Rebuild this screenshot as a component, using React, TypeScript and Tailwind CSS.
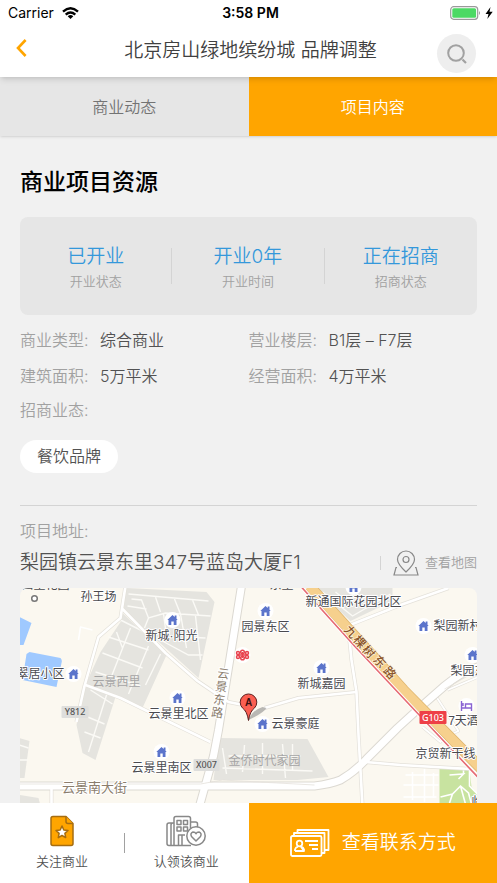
const stats = [
  { value: "已开业", label: "开业状态" },
  { value: "开业0年", label: "开业时间" },
  { value: "正在招商", label: "招商状态" },
];

const details = [
  { label: "商业类型:", value: "综合商业" },
  { label: "营业楼层:", value: "B1层 – F7层" },
  { label: "建筑面积:", value: "5万平米" },
  { label: "经营面积:", value: "4万平米" },
];

const places = [
  { name: "孙王场", x: 98, y: 601 },
  { name: "新城·阳光", x: 171, y: 640, icon: [172, 620] },
  { name: "园景东区", x: 265, y: 631, icon: [265, 611] },
  { name: "新通国际花园北区", x: 353, y: 606, icon: [353, 587] },
  { name: "新城嘉园", x: 321, y: 688, icon: [321, 668] },
  { name: "翠居小区", x: 40, y: 678, icon: [73, 674] },
  { name: "云景里北区", x: 178, y: 718, icon: [177, 698] },
  { name: "云景里南区", x: 161, y: 772, icon: [161, 752] },
  { name: "云景豪庭", x: 295, y: 728, icon: [262, 724] },
  { name: "梨园新村", x: 457, y: 630, icon: [423, 626] },
  { name: "梨园东里", x: 474, y: 675, icon: [472, 655] },
  { name: "7天酒店", x: 469, y: 725 },
  { name: "京贸新干线", x: 445, y: 758 },
  { name: "临河里", x: 489, y: 806 },
];

const roadName = [
  { ch: "云", x: 223, y: 678 },
  { ch: "景", x: 221, y: 691 },
  { ch: "东", x: 219, y: 704 },
  { ch: "路", x: 217, y: 717 },
];

const highwayName = [
  { ch: "九", x: 350, y: 632 },
  { ch: "棵", x: 359, y: 642 },
  { ch: "树", x: 368, y: 652 },
  { ch: "东", x: 379, y: 662 },
  { ch: "路", x: 389, y: 673 },
];

const roads = [
  "M19 786H314Q330 784 340 780Q354 772 366 759L397 728L420 707L444 686Q460 672 480 666",
  "M241 586L230 655L218 730L213 756L199 806",
];

const lanes = [
  "M125 586L120 618L98 637L84 686L76 722",
  "M122 609L165 653L197 681L228 702L248 706",
  "M85 685L120 698L210 742",
  "M264 708L298 698L356 692",
  "M349 640L351 660L356 692L358 735L362 806",
  "M448 588L400 605L347 626",
  "M365 762L400 765L470 769",
  "M51 788V806",
];

const alleys =
  "M128 594L208 601M131 599L141 600L148 618L165 613L210 616M155 597L160 612M174 599L180 614M192 600L198 615M148 618L144 628M180 614L186 648M195 616L200 660M163 614L166 636M184 637L205 638M160 640L188 655L202 655M127 606L146 609M108 637L148 650M116 632L122 648M102 653L142 668M130 628L108 684M148 646L128 694M160 654L145 685M95 672L140 686M90 690L112 704M107 692L88 752M80 714L104 724M84 732L100 738M120 620L150 635M222 748L226 774M244 745L242 772M262 743V774M282 744L285 778M228 756H300M222 768L312 771M292 744V770M322 592L352 616L390 594M335 592L350 604M19 745L28 748M19 760H27";

function HouseMark({ x, y }: { x: number; y: number }) {
  return (
    <g transform={`translate(${x} ${y})`}>
      <circle r="8" fill="#fff" />
      <path d="M-5.2 0L0-5L2.2-3V-4.6H4V-1.3L5.2 0H4V5H1.2V1.5H-1.2V5H-4V0Z" fill="#5b74cb" />
    </g>
  );
}

function AreaMap() {
  return (
    <svg
      viewBox="19 588 458 215"
      preserveAspectRatio="xMidYMin slice"
      className='h-full w-full font-["Liberation_Sans","Noto_Sans_CJK_SC",sans-serif] font-normal'
      role="img"
      aria-label="地图"
    >
      <rect x="19" y="588" width="458" height="240" fill="#fbf8f0" />
      <g fill="#e5e4df">
        <path d="M126 588L206 592L214 602L198 678L165 648L122 609Z" />
        <path d="M122 613L166 655L142 708L115 697L95 760L82 753L76 725L84 687L100 652L120 622Z" />
        <path d="M218 738L307 739L328 777L297 780H213Z" />
        <path d="M314 588H392V601L350 621Z" />
        <path d="M19 738L29 741L24 778H19ZM19 795L38 798L40 806H19Z" />
      </g>
      <path d="M19 617L31 623L23 645H19ZM29 652L60 658Q62 660 61 663L56 687L22 680L26 654Z" fill="#9fc9ff" />
      <path d="M439 769H469L471 787L480 797V806H439Z" fill="#c8e3a0" />
      <path d={alleys} fill="none" stroke="#fbfaf6" strokeWidth="1.4" />
      <g fill="none" stroke="#fff" strokeWidth="1.6">
        <path d="M405 775H438M403 785H438M403 797H436M412 772V800M424 769V802M433 773V798" />
        <path d="M449 775L463 774L458 779M463 774V770M440 797L452 794L460 786L468 793L471 804M452 794L449 803M460 786L465 804M469 769V786L480 797" />
      </g>
      <g fill="none" strokeLinejoin="round">
        <path d="M78 640L80 627L92 630" stroke="#fff" strokeWidth="1.6" />
        <path d="M422 727L440 742L444 736M436 697L458 731L447 736M447 690L480 676" stroke="#e4e1da" strokeWidth="3" />
        <path d="M422 727L440 742L444 736M436 697L458 731L447 736M447 690L480 676" stroke="#fff" strokeWidth="1.8" />
        {lanes.map((d) => (
          <path key={d} d={d} stroke="#e4e1da" strokeWidth="4" />
        ))}
        {roads.map((d) => (
          <path key={d} d={d} stroke="#dcd9d2" strokeWidth="9" />
        ))}
        {lanes.map((d) => (
          <path key={d} d={d} stroke="#fff" strokeWidth="2.6" />
        ))}
        {roads.map((d) => (
          <path key={d} d={d} stroke="#fff" strokeWidth="7" />
        ))}
        <path d="M19 784H200L222 780L314 785M444 689L480 669" stroke="#e4e1da" strokeWidth="0.8" />
        <path d="M309 586L403 690L482 770" stroke="#dfb671" strokeWidth="11" />
        <path d="M309 586L403 690L482 770" stroke="#f6d08d" strokeWidth="9.4" />
        <path d="M300 586L354 646L414 710L480 780" stroke="#fff" strokeWidth="3.4" />
        <path d="M300 586L354 646L414 710L480 780" stroke="#e66b74" strokeWidth="1.6" />
      </g>
      {places.map((p) => p.icon && <HouseMark key={p.name} x={p.icon[0]} y={p.icon[1]} />)}
      <circle cx="466" cy="706" r="8" fill="#fff" />
      <path d="M461 701V711M461 708H471M471 711V704H465V708M462.5 703V706" fill="none" stroke="#8a63d2" strokeWidth="1.4" />
      <circle cx="34" cy="598.5" r="2.8" fill="#fff" stroke="#777" strokeWidth="1.5" />
      <circle cx="242" cy="655" r="8" fill="#fff" />
      <g fill="none" stroke="#e8434f" strokeWidth="1.5">
        <circle cx="242" cy="652" r="1.8" />
        <circle cx="242" cy="658" r="1.8" />
        <circle cx="237.5" cy="653" r="1.5" />
        <circle cx="237.5" cy="657" r="1.5" />
        <circle cx="246.5" cy="653" r="1.5" />
        <circle cx="246.5" cy="657" r="1.5" />
        <path d="M238 655H246M242 652V658" />
      </g>
      <g textAnchor="middle" fontSize="12">
        <g fill="#4a4a4f" stroke="#fff" strokeWidth="2" strokeLinejoin="round" paintOrder="stroke">
          {places.map((p) => (
            <text key={p.name} x={p.x} y={p.y}>
              {p.name}
            </text>
          ))}
        </g>
        <text x="45" y="589" fill="#4a4a4f">西里花园</text>
        <text x="281" y="589" fill="#4a4a4f">东里</text>
        <g fill="#a5a5a5">
          <text x="116" y="686">云景西里</text>
          <text x="264" y="765">金侨时代家园</text>
        </g>
        <g fill="#8b7d6d" stroke="#fff" strokeWidth="2" paintOrder="stroke">
          <text x="94" y="792" fontSize="13">云景南大街</text>
          {roadName.map((c) => (
            <text key={c.ch} x={c.x} y={c.y} transform={`rotate(8 ${c.x} ${c.y - 5})`}>
              {c.ch}
            </text>
          ))}
        </g>
        <g fill="#8a5428" stroke="#fdf0d4" strokeWidth="1.5" paintOrder="stroke" fontWeight="500">
          {highwayName.map((c) => (
            <text key={c.ch} x={c.x} y={c.y + 4} transform={`rotate(47 ${c.x} ${c.y})`}>
              {c.ch}
            </text>
          ))}
        </g>
      </g>
      <g textAnchor="middle" fontSize="9" fontWeight="500" fontFamily="Noto Sans">
        <rect x="61" y="706" width="27" height="12" rx="1" fill="#dededc" />
        <text x="74.5" y="715" fill="#555">Y812</text>
        <rect x="193" y="759" width="26" height="12" rx="1" fill="#dededc" />
        <text x="206" y="768" fill="#555">X007</text>
        <rect x="419" y="711" width="27" height="13" rx="1" fill="#ee4047" />
        <text x="432.5" y="721" fill="#fff">G103</text>
      </g>
      <path d="M248 720Q252 710 262 707L266 708Q263 713 248 720Z" fill="#777" opacity="0.5" />
      <path d="M248 720.5Q246.5 711 242 708A8.3 8.3 0 1 1 254 708Q249.5 711 248 720.5Z" fill="#fb5f52" stroke="#5b2020" />
      <text x="248" y="706" fontSize="10" fontWeight="600" textAnchor="middle" fill="#3a1010">A</text>
    </svg>
  );
}

function StatusBar() {
  return (
    <div className="grid h-[26px] grid-cols-3 items-center pr-1 pl-2 text-sm font-normal text-black">
      <div className="flex items-center gap-2">
        <span>Carrier</span>
        <svg width="17" height="13" viewBox="0 0 17 13" fill="none" stroke="#000" strokeWidth="2.4">
          <path d="M1 4.6Q8.5-2 16 4.6M3.7 7.6Q8.5 3.4 13.3 7.6" />
          <path d="M8.5 12L5.7 9.2Q8.5 7 11.3 9.2Z" fill="#000" stroke="none" />
        </svg>
      </div>
      <span className="text-center font-semibold">3:58 PM</span>
      <div className="flex items-center justify-end gap-1">
        <svg width="31" height="14" viewBox="0 0 31 14">
          <rect x="0.7" y="0.7" width="27" height="12.6" rx="3" fill="#fff" stroke="#999" strokeWidth="1.2" />
          <rect x="2.3" y="2.3" width="23.8" height="9.4" rx="1.5" fill="#4cd964" />
          <path d="M29 5Q31 7 29 9Z" fill="#999" />
        </svg>
        <svg width="8" height="12" viewBox="0 0 8 12">
          <path d="M5.5 0L0.5 7H3.5L2.3 12L7.7 4.8H4.5Z" fill="#000" />
        </svg>
      </div>
    </div>
  );
}

function FileStarIcon() {
  return (
    <svg width="24" height="32" viewBox="0 0 24 32" stroke="#a66d10" strokeWidth="1.5" strokeLinejoin="round">
      <path d="M3 1.5H16L23 8.5V28.5Q23 30.5 21 30.5H3Q1 30.5 1 28.5V3.5Q1 1.5 3 1.5Z" fill="#ffa500" />
      <path d="M16 1.5V6.5Q16 8.5 18 8.5H23" fill="#ffa500" />
      <path d="M12 11L13.8 15L18 15.5L14.9 18.4L15.7 22.6L12 20.5L8.3 22.6L9.1 18.4L6 15.5L10.2 15Z" fill="#fff" />
    </svg>
  );
}

function BuildingIcon() {
  return (
    <svg width="40" height="32" viewBox="0 0 40 32" fill="none" stroke="#888" strokeWidth="1.5" strokeLinejoin="round">
      <path d="M8 30.5H3Q1 30.5 1 28.5V10Q1 8 3 8H8M5 30V10Q5 8 7 8" />
      <path d="M8 30.5V3.5Q8 1.5 10 1.5H22.5Q24.5 1.5 24.5 3.5V13M24.5 7H29.5Q31.5 7 31.5 9V12" />
      <path d="M11 5.5H15V9.5H11ZM17.5 5.5H21.5V9.5H17.5ZM11 12H15V16H11ZM17.5 12H21.5V16H17.5ZM8 30.5H25M12.5 30V20H19M16 20V30" />
      <circle cx="30" cy="21" r="9.2" fill="#fff" />
      <path d="M30 26L25.5 21.5Q23.8 18.2 27 17Q29.2 17 30 18.7Q30.8 17 33 17Q36.2 18.2 34.5 21.5Z" />
    </svg>
  );
}

function CardsIcon() {
  return (
    <svg width="40" height="28" viewBox="0 0 40 28" fill="none" stroke="#fff" strokeWidth="1.8" strokeLinejoin="round">
      <rect x="1" y="7" width="30.5" height="20" rx="1.5" />
      <path d="M4 6.5V4H34.5V24H32M7.5 4V1H38.5V21H35" />
      <circle cx="9.5" cy="14.5" r="2.8" />
      <path d="M5 22V20.5Q5.5 18.5 8 17.7M11 17.7Q13.5 18.5 14 20.5V22ZM5 22H14M15 12H28M19 16H28M22 20H28" />
    </svg>
  );
}

export default function App() {
  return (
    <div className='flex h-screen flex-col overflow-hidden bg-[#f1f1f1] font-[Inter,"Noto_Sans_CJK_SC",sans-serif] font-[350] text-neutral-600'>
      <header className="relative z-10 bg-white shadow-md">
        <StatusBar />
        <div className="grid h-[51px] grid-cols-[48px_1fr_40px] items-center pr-5 pl-4">
          <button aria-label="返回" className="mb-2 h-10">
            <svg width="11" height="18" viewBox="0 0 11 18" fill="none" stroke="#ffa500" strokeWidth="2.6">
              <path d="M9.6 1L2 9L9.6 17" />
            </svg>
          </button>
          <h1 className="text-center text-[19px] text-neutral-700">北京房山绿地缤纷城 品牌调整</h1>
          <button
            aria-label="搜索"
            className="mt-1 flex size-[39px] items-center justify-center rounded-full bg-[#eeeeee] text-neutral-400"
          >
            <svg width="20" height="20" viewBox="0 0 20 20" fill="none" stroke="currentColor" strokeWidth="2">
              <circle cx="9" cy="9" r="7.8" />
              <path d="M15.5 15.5L19 19" strokeWidth="2.2" />
            </svg>
          </button>
        </div>
      </header>

      <nav className="grid h-[59px] shrink-0 grid-cols-2 text-base shadow-sm">
        <button className="bg-[#e6e6e6] text-neutral-500">商业动态</button>
        <button className="bg-[#ffa500] text-white">项目内容</button>
      </nav>

      <main className="flex min-h-0 flex-1 flex-col px-5 pt-7">
        <h2 className="text-[23px] leading-9 font-medium text-black">商业项目资源</h2>

        <section className="mt-[17px] grid h-[98px] shrink-0 grid-cols-3 items-center divide-x divide-neutral-300 rounded-lg bg-[#e6e6e6] text-center">
          {stats.map((s) => (
            <div key={s.label} className="flex h-9 flex-col items-center justify-center pt-0.5">
              <div className="text-[19px] leading-7 text-[#3498db]">{s.value}</div>
              <div className="text-[13px] leading-5 text-neutral-400">{s.label}</div>
            </div>
          ))}
        </section>

        <dl className="mt-[7px] grid grid-cols-2 text-base leading-9">
          {details.map((d) => (
            <div key={d.label} className="flex">
              <dt className="w-20 text-neutral-400">{d.label}</dt>
              <dd>{d.value}</dd>
            </div>
          ))}
        </dl>
        <div className="text-base leading-8 text-neutral-400">招商业态:</div>
        <div className="mt-[14px] flex">
          <span className="rounded-full bg-white px-[17px] text-base leading-[33px]">餐饮品牌</span>
        </div>

        <hr className="mt-8 border-neutral-300" />

        <div className="mt-[11px] text-base leading-7 text-neutral-400">项目地址:</div>
        <div className="flex h-9 shrink-0 items-center justify-between">
          <address className="text-[19px] not-italic">梨园镇云景东里347号蓝岛大厦F1</address>
          <div className="flex items-center">
            <span className="mr-3 h-[14px] w-px bg-neutral-300" />
            <a href="#map" className="flex items-center gap-1.5 text-[13px] text-neutral-400">
              <svg width="26" height="26" viewBox="0 0 26 26" fill="none" stroke="#888" strokeWidth="1.2">
                <path d="M13 22Q4.5 14 4.5 9.5A8.5 8.5 0 0 1 21.5 9.5Q21.5 14 13 22Z" />
                <circle cx="13" cy="9.5" r="3" />
                <path d="M4 17.5H3L1 25H25L23 17.5H22" />
              </svg>
              查看地图
            </a>
          </div>
        </div>

        <div id="map" className="mt-[7px] min-h-0 flex-1 overflow-hidden rounded-t-lg">
          <AreaMap />
        </div>
      </main>

      <footer className="grid h-20 shrink-0 grid-cols-2 bg-white">
        <div className="grid grid-cols-2">
          <button className="flex flex-col items-center pt-3 text-[13px] leading-6">
            <FileStarIcon />
            <span className="mt-0.5">关注商业</span>
          </button>
          <button className="relative flex flex-col items-center pt-3 text-[13px] leading-6">
            <span className="absolute top-[30px] left-0 h-5 w-px bg-neutral-400" />
            <BuildingIcon />
            <span className="mt-0.5">认领该商业</span>
          </button>
        </div>
        <button className="flex items-center justify-center gap-3 bg-[#ffa500] text-[19px] text-white">
          <CardsIcon />
          查看联系方式
        </button>
      </footer>
    </div>
  );
}
